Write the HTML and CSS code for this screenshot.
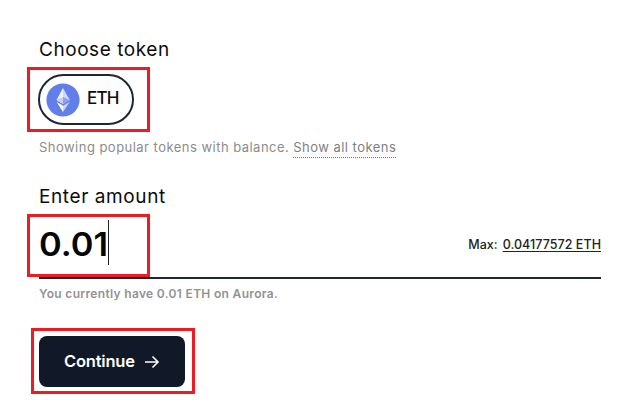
FILE: index.html
```html
<!DOCTYPE html>
<html lang="en">
<head>
<meta charset="utf-8">
<title>Transfer</title>
<link rel="stylesheet" href="styles.css">
</head>
<body>
<main class="form">
  <h2 class="label">Choose token</h2>
  <div class="mark mark-token">
    <button class="token">
      <svg class="token-icon" viewBox="0 0 34 34" width="34" height="34">
        <circle cx="17" cy="17" r="16.6" fill="#627eea"/>
        <path d="M17 5L10.5 17L17 21Z" fill="#fff" opacity=".9"/>
        <path d="M17 5L23.8 17L17 21Z" fill="#cdd5f8"/>
        <path d="M10.5 17L17 14V21Z" fill="#c5cef6"/>
        <path d="M23.8 17L17 14V21Z" fill="#8ea1f0"/>
        <path d="M10.5 18.8L17 22.8V29Z" fill="#fff"/>
        <path d="M23.8 18.8L17 22.8V29Z" fill="#cdd5f8"/>
      </svg>
      <span class="token-name">ETH</span>
    </button>
  </div>
  <p class="hint"><span>Showing popular tokens with balance.</span><a class="show-all">Show all tokens</a></p>
  <h2 class="label label-amount">Enter amount</h2>
  <div class="amount">
    <div class="mark mark-amount"><span class="value">0.01</span><i class="caret"></i></div>
    <div class="max"><span>Max:</span><a class="max-value">0.04177572 ETH</a></div>
  </div>
  <p class="balance">You currently have 0.01 ETH on Aurora.</p>
  <div class="mark mark-continue">
    <button class="continue"><span class="continue-text">Continue</span>
      <svg width="16" height="14" viewBox="0 0 16 14" fill="none" stroke="#fff" stroke-width="1.6"><path d="M1 7H14M8.5 1.5L14 7L8.5 12.5"/></svg>
    </button>
  </div>
</main>
</body>
</html>
```
FILE: styles.css
```css
*, *::after { box-sizing: border-box; }
body { margin: 0; min-height: 413px; background: #fff; color: #111; font-family: Inter, "Liberation Sans", sans-serif; }
.form { width: 601px; padding: 38px 0 0 39px; }
h2, p { margin: 0; font-weight: 400; white-space: nowrap; }
.label { height: 24px; font-size: 19px; line-height: 24px; letter-spacing: .55px; color: #0c0c0c; }
.mark { position: relative; }
.mark::after { content: ""; position: absolute; border: 3px solid #ed1c24; pointer-events: none; }
.mark-token { margin: 12px 0 0 -1px; }
.mark-token::after { left: -11px; top: -7px; width: 123px; height: 65px; }
button { font: inherit; margin: 0; padding: 0; display: flex; align-items: center; }
.token { width: 96px; height: 51px; padding-left: 6px; gap: 7px; border: 2px solid #1e2537; border-radius: 26px; background: #fff; }
.token-icon { flex: none; }
.token-name { font-size: 17px; font-weight: 500; letter-spacing: -.8px; color: #0c0c0c; position: relative; top: -2px; }
.hint { display: flex; gap: 4px; margin-top: 12px; height: 21px; font-size: 13px; line-height: 20px; color: #8c8c8c; letter-spacing: .47px; }
.show-all { height: 21px; border-bottom: 1px dotted #777; color: #808080; }
.label-amount { margin-top: 27px; letter-spacing: .6px; }
.amount { display: flex; justify-content: space-between; height: 70px; border-bottom: 2px solid #1e2537; }
.mark-amount { display: flex; align-items: flex-start; width: 70px; justify-content: space-between; }
.mark-amount::after { left: -12px; top: 5px; width: 123px; height: 63px; }
.value { width: 69px; font-size: 32.5px; font-weight: 600; line-height: 40px; margin-top: 16px; transform: scaleX(1.06); transform-origin: left; color: #060606; }
.caret { flex: none; width: 1px; height: 45px; margin-top: 11px; background: #222; }
.max { display: flex; gap: 5px; margin-top: 26px; font-size: 12.5px; font-weight: 500; line-height: 20px; letter-spacing: .05px; color: #222; }
.max-value { height: 17px; text-decoration: underline; text-underline-offset: 2px; }
.balance { height: 20px; margin-top: 5px; font-size: 12px; font-weight: 600; line-height: 20px; letter-spacing: .32px; color: #929292; }
.mark-continue { margin-top: 32px; }
.mark-continue::after { left: -8px; top: -8px; width: 164px; height: 66px; }
.continue { width: 146px; height: 51px; padding-left: 25px; gap: 9px; border: 0; border-radius: 8px; background: #111827; color: #fff; }
.continue-text { font-size: 16.5px; font-weight: 600; letter-spacing: -.2px; position: relative; top: -1px; }
```
